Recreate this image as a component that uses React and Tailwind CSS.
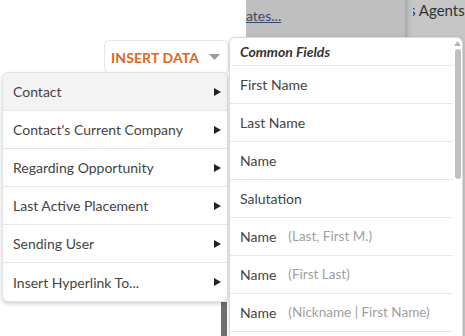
import React from "react";

const leftItems = [
  "Contact",
  "Contact's Current Company",
  "Regarding Opportunity",
  "Last Active Placement",
  "Sending User",
  "Insert Hyperlink To...",
];

const rightItems = [
  ["First Name"],
  ["Last Name"],
  ["Name"],
  ["Salutation"],
  ["Name", "(Last, First M.)"],
  ["Name", "(First Last)"],
  ["Name", "(Nickname | First Name)"],
  [""],
];

function Arrow() {
  return (
    <svg width="7" height="8" viewBox="0 0 7 8" className="shrink-0">
      <path d="M0 0 L7 4 L0 8 Z" fill="#222" />
    </svg>
  );
}

export default function App() {
  return (
    <div
      className="relative w-[465px] h-[336px] overflow-hidden bg-white"
      style={{ fontFamily: "Lato, 'Noto Sans', sans-serif" }}
    >
      {/* background page */}
      <div className="absolute inset-0 flex">
        <div className="w-[246px] bg-white"></div>
        <div className="w-[159px] bg-[#bfbfbf] pt-[3px]">
          <span className="text-[14px] text-[#3b4a6b] underline">ates...</span>
        </div>
        <div className="w-[8px] bg-gradient-to-r from-[#a9a9a9] via-[#bdbdbd] to-[#c6c6c6]"></div>
        <div className="flex-1 bg-[#c6c6c6] overflow-hidden whitespace-nowrap leading-[20px]">
          <span className="text-[15px] text-[#333] ml-[-4px]">s Agents,</span>
        </div>
      </div>
      <div className="absolute left-[221px] top-[302px] w-[6px] h-[40px] bg-[#6e6e6e]"></div>

      {/* Insert data button */}
      <div className="absolute left-[104px] top-[40px] w-[125px] h-[34px] bg-white border border-[#e6e6e6] rounded-md flex items-center pl-[6px] pr-[8px]">
        <span className="text-[14px] font-bold text-[#e0661c] tracking-[0.1px]">INSERT DATA</span>
        <svg width="11" height="6" viewBox="0 0 11 6" className="ml-auto">
          <path d="M0 0 L11 0 L5.5 6 Z" fill="#9a9a9a" />
        </svg>
      </div>

      {/* Left menu */}
      <div className="absolute left-[2px] top-[72px] w-[226px] bg-white border border-[#e2e2e2] rounded-md shadow-[0_2px_4px_rgba(0,0,0,0.18)] overflow-hidden">
        {leftItems.map((t, i) => (
          <div
            key={t}
            className={`h-[38px] flex items-center pl-[10px] pr-[6px] text-[14px] text-[#444] ${
              i < leftItems.length - 1 ? "border-b border-[#e8e8e8]" : ""
            } ${i === 0 ? "bg-[#f3f3f3]" : ""}`}
          >
            <span>{t}</span>
            <span className="ml-auto">
              <Arrow />
            </span>
          </div>
        ))}
      </div>

      {/* Right dropdown */}
      <div className="absolute left-[229px] top-[37px] w-[234px] h-[320px] bg-white border border-[#dcdcdc] rounded-md shadow-[0_1px_4px_rgba(0,0,0,0.15)] flex overflow-hidden">
        <div className="w-[223px] shrink-0">
          <div className="h-[28px] flex items-center pl-[10px] text-[14px] font-bold italic text-[#333] border-b border-[#e8e8e8]">
            Common Fields
          </div>
          {rightItems.map(([a, b], i) => (
            <div
              key={i}
              className="h-[38px] flex items-center pl-[10px] text-[14px] text-[#444] border-b border-[#e8e8e8] whitespace-nowrap"
            >
              <span>{a}</span>
              {b && <span className="ml-[12px] text-[13.5px] text-[#a0a0a0]">{b}</span>}
            </div>
          ))}
        </div>
        <div className="flex-1 flex flex-col items-center pt-[3px]">
          <svg width="7" height="5" viewBox="0 0 7 5">
            <path d="M0 5 L3.5 0 L7 5 Z" fill="#b5b5b5" />
          </svg>
          <div className="mt-[3px] w-[6px] h-[130px] rounded-full bg-[#c1c1c1]"></div>
        </div>
      </div>
    </div>
  );
}
